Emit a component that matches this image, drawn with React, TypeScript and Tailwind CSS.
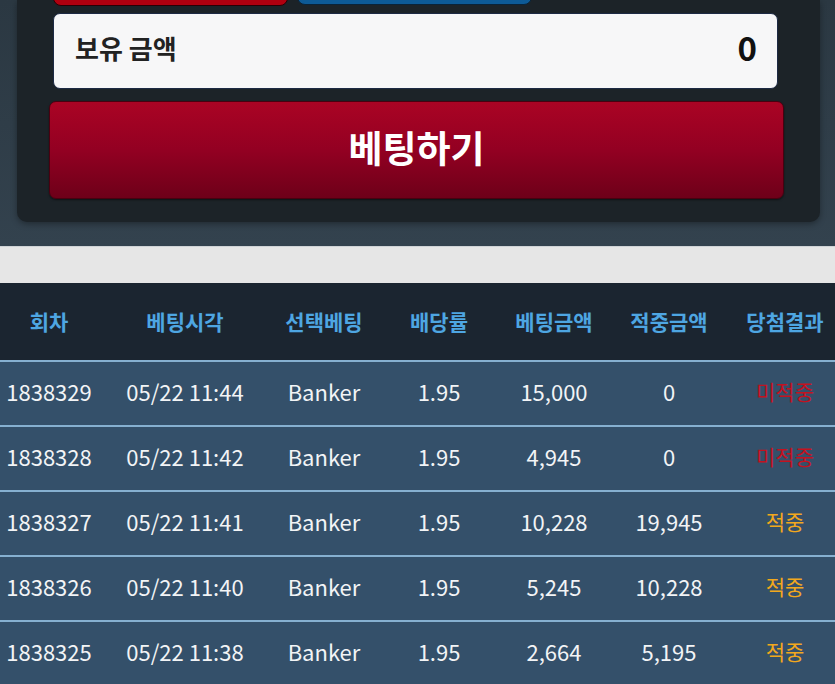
import React from "react";

const font = { fontFamily: '"Noto Sans CJK KR", "Noto Sans", sans-serif' };

type Row = {
  round: string;
  time: string;
  pick: string;
  odds: string;
  bet: string;
  win: string;
  hit: boolean;
};

const rows: Row[] = [
  { round: "1838329", time: "05/22 11:44", pick: "Banker", odds: "1.95", bet: "15,000", win: "0", hit: false },
  { round: "1838328", time: "05/22 11:42", pick: "Banker", odds: "1.95", bet: "4,945", win: "0", hit: false },
  { round: "1838327", time: "05/22 11:41", pick: "Banker", odds: "1.95", bet: "10,228", win: "19,945", hit: true },
  { round: "1838326", time: "05/22 11:40", pick: "Banker", odds: "1.95", bet: "5,245", win: "10,228", hit: true },
  { round: "1838325", time: "05/22 11:38", pick: "Banker", odds: "1.95", bet: "2,664", win: "5,195", hit: true },
];

const headers = ["회차", "베팅시각", "선택베팅", "배당률", "베팅금액", "적중금액", "당첨결과"];

// column widths tuned so centres line up with the screenshot
const cols = "grid grid-cols-[98px_174px_104px_126px_104px_126px_106px]";

export default function App() {
  return (
    <div className="w-[835px] h-[684px] overflow-hidden bg-[#2f3d48]" style={font}>
      {/* betting panel */}
      <div className="h-[246px] bg-gradient-to-b from-[#2b3842] to-[#33424e]">
        <div className="ml-[17px] w-[803px] h-[222px] rounded-b-[10px] bg-[#1c2328] pl-[32px] pr-[36px] shadow-[0_2px_6px_rgba(0,0,0,0.35)] flex flex-col">
          <div className="flex gap-[9px] pl-[4px] -mt-[34px]">
            <div className="w-[235px] h-[40px] rounded-[8px] bg-[#b0000f] border border-[#2a0006]" />
            <div className="w-[235px] h-[39px] rounded-[8px] bg-[#0d5a96] border border-[#0a2338]" />
          </div>
          <div className="mt-[7px] ml-[4px] mr-[6px] h-[76px] rounded-[7px] bg-[#f7f7f8] border border-[#1d2a44] flex items-center justify-between pl-[21px] pr-[20px] pb-[7px]">
            <span className="text-[26px] font-bold text-[#222]">보유 금액</span>
            <span className="text-[33px] font-bold text-[#111]">0</span>
          </div>
          <button className="mt-[12px] h-[98px] rounded-[7px] border border-[#4a0010] bg-gradient-to-b from-[#aa0424] via-[#930022] to-[#6e0019] text-white text-[37px] font-bold pb-[4px] shadow-[0_1px_2px_rgba(0,0,0,0.5)]">
            베팅하기
          </button>
        </div>
      </div>

      {/* light strip */}
      <div className="h-[37px] bg-[#e6e6e6] border-t border-[#cfd3d6]" />

      {/* history table */}
      <div className={`${cols} h-[77px] bg-[#1b2530] items-center`}>
        {headers.map((h) => (
          <div key={h} className="text-center text-[21px] font-bold text-[#4ea6e2] whitespace-nowrap">
            {h}
          </div>
        ))}
      </div>
      {rows.map((r) => (
        <div key={r.round} className={`${cols} h-[65px] bg-[#34506a] border-t-2 border-[#86b0d0] items-center pb-[4px] text-[22px] text-[#f2f4f6]`}>
          <div className="text-center">{r.round}</div>
          <div className="text-center whitespace-nowrap">{r.time}</div>
          <div className="text-center">{r.pick}</div>
          <div className="text-center">{r.odds}</div>
          <div className="text-center">{r.bet}</div>
          <div className="text-center">{r.win}</div>
          <div className={`text-center text-[21px] ${r.hit ? "text-[#f2a81d]" : "text-[#c3121f]"}`}>
            {r.hit ? "적중" : "미적중"}
          </div>
        </div>
      ))}
    </div>
  );
}
